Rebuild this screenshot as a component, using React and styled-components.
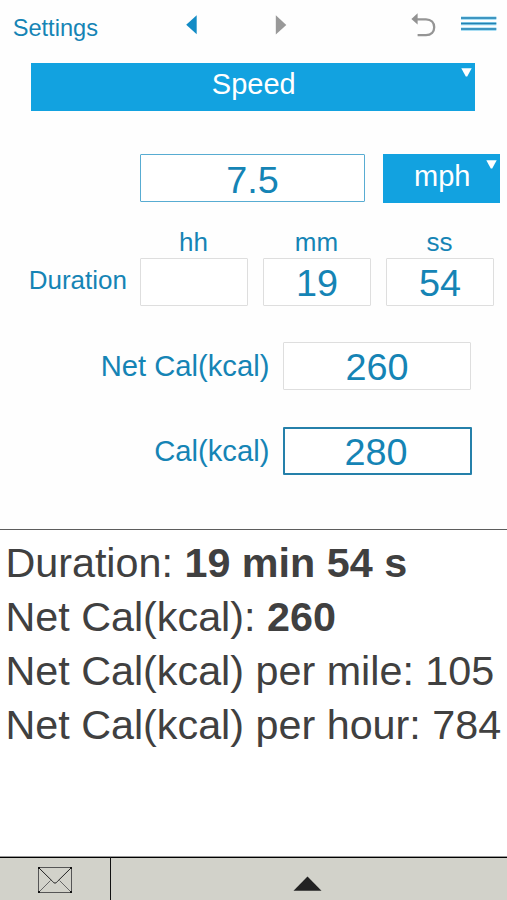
import React from "react";
import styled, { createGlobalStyle } from "styled-components";

const Global = createGlobalStyle`
  * { box-sizing: border-box; }
  body { margin: 0; background: #fefefe; }
`;

const Screen = styled.main`
  display: flex;
  flex-direction: column;
  width: 507px;
  height: 900px;
  overflow: hidden;
  background: #fefefe;
  color: #1584b5;
  font-family: "Liberation Sans", Arial, sans-serif;
  white-space: nowrap;
`;

const Toolbar = styled.header`
  display: flex;
  align-items: flex-start;
  height: 63px;
  flex: none;
`;

const SettingsLink = styled.a`
  width: 173px;
  padding-left: 12.7px;
  margin-top: 14px;
  font-size: 23.6px;
  line-height: 28px;
`;

const ToolIcon = styled.svg`
  display: block;
  flex: none;
  width: ${(p) => p.$w}px;
  height: 50px;
`;

const Dropdown = styled.button`
  position: relative;
  flex: none;
  width: ${(p) => p.$w}px;
  height: ${(p) => p.$h}px;
  margin: 0 0 0 ${(p) => p.$left}px;
  padding: 0 0 ${(p) => p.$lift}px 1.6px;
  border: 0;
  background: #12a2e0;
  color: #fff;
  font: 29px/34px "Liberation Sans", Arial, sans-serif;
  text-align: center;
`;

const DropMark = styled.svg`
  position: absolute;
  top: ${(p) => p.$top}px;
  right: 3px;
  width: 11px;
  height: 9px;
`;

const SpeedRow = styled.div`
  display: flex;
  flex: none;
  height: 49px;
  margin-top: 43px;
  padding-left: 140px;
`;

const borders = {
  light: "1px solid #dedede",
  accent: "1px solid #58acd2",
  focused: "2px solid #2580aa",
};

const Field = styled.div`
  flex: none;
  width: ${(p) => p.$w}px;
  height: 48px;
  padding-top: ${(p) => p.$pad || 0}px;
  padding-right: ${(p) => (p.$tone === "focused" ? 3 : 0)}px;
  border: ${(p) => borders[p.$tone || "light"]};
  border-radius: 1px;
  background: #fff;
  font-size: 37.8px;
  line-height: ${(p) => (p.$tone === "focused" ? 46 : 48)}px;
  text-align: center;
`;

const DurationGrid = styled.div`
  display: grid;
  flex: none;
  grid-template-columns: 125px 108px 108px 108px;
  grid-template-rows: 31px 48px;
  column-gap: 15px;
  margin-top: 24px;
  text-align: center;
`;

const UnitLabel = styled.span`
  font-size: 26px;
  line-height: 31px;
  padding-right: 1px;
`;

const DurationLabel = styled.span`
  font-size: 26px;
  line-height: 44px;
  text-align: right;
  margin-right: -2px;
`;

const EnergyRow = styled.div`
  display: flex;
  flex: none;
  height: 48px;
  margin-top: ${(p) => p.$top}px;
`;

const EnergyLabel = styled.span`
  width: 283px;
  padding-right: 13.6px;
  font-size: 29.2px;
  line-height: 49px;
  text-align: right;
`;

const Results = styled.section`
  flex: 1;
  margin-top: 54px;
  padding: 6px 0 0 5.4px;
  border-top: 1px solid #5c5c5c;
  color: #404040;
  background: #fff;
  font-size: 41.3px;
`;

const ResultLine = styled.div`
  height: 54px;
  line-height: 54px;
`;

const Footer = styled.footer`
  display: flex;
  flex: none;
  height: 44px;
  border-top: 1px solid #999;
  background: #d2d2ca;
  box-shadow: inset 0 1px #000;
`;

const FooterCell = styled.div`
  flex: ${(p) => (p.$w ? "none" : 1)};
  width: ${(p) => (p.$w ? `${p.$w}px` : "auto")};
  border-right: ${(p) => (p.$w ? "1px solid #111" : 0)};
  svg { display: block; }
`;

function Mark({ top }) {
  return (
    <DropMark $top={top} viewBox="0 0 11 9">
      <path d="M.3.3h10.4L6.2 8.4H4.8Z" fill="#fff" />
    </DropMark>
  );
}

export default function App() {
  return (
    <Screen>
      <Global />
      <Toolbar>
        <SettingsLink>Settings</SettingsLink>
        <ToolIcon $w={90} viewBox="0 0 90 50">
          <path d="M13.2 24.8 23.7 15.3v19Z" fill="#128bc5" />
        </ToolIcon>
        <ToolIcon $w={137} viewBox="0 0 137 50">
          <path d="M12.8 15.2v19.4L23.3 24.9Z" fill="#999" />
        </ToolIcon>
        <ToolIcon $w={50} viewBox="0 0 50 50">
          <path d="M11.4 19.1 17.6 13.2v11.4Z" fill="#929292" />
          <path d="M16.8 19.3H26C31.2 19.3 34.2 22.6 34.2 27.2S31.2 35.1 26 35.1H17.6" fill="none" stroke="#959595" strokeWidth="2.3" />
        </ToolIcon>
        <ToolIcon $w={50} viewBox="0 0 50 50">
          <path d="M11 18.2h35.3M11 23.7h35.3M11 29.2h35.3" stroke="#8fd3ef" strokeWidth="3.2" />
          <path d="M11 18h35.3M11 23.5h35.3M11 29h35.3" stroke="#2482b2" strokeWidth="1.6" />
        </ToolIcon>
      </Toolbar>

      <Dropdown $w={444} $h={48} $left={31} $lift={6}>
        Speed
        <Mark top={5} />
      </Dropdown>

      <SpeedRow>
        <Field $w={225} $tone="accent" $pad={1}>7.5</Field>
        <Dropdown $w={117} $h={49} $left={18} $lift={6}>
          mph
          <Mark top={6} />
        </Dropdown>
      </SpeedRow>

      <DurationGrid>
        <span />
        <UnitLabel>hh</UnitLabel>
        <UnitLabel>mm</UnitLabel>
        <UnitLabel>ss</UnitLabel>
        <DurationLabel>Duration</DurationLabel>
        <Field $w={108} />
        <Field $w={108}>19</Field>
        <Field $w={108}>54</Field>
      </DurationGrid>

      <EnergyRow $top={36}>
        <EnergyLabel>Net Cal(kcal)</EnergyLabel>
        <Field $w={188}>260</Field>
      </EnergyRow>
      <EnergyRow $top={37}>
        <EnergyLabel>Cal(kcal)</EnergyLabel>
        <Field $w={189} $tone="focused">280</Field>
      </EnergyRow>

      <Results>
        <ResultLine>Duration: <b>19 min 54 s</b></ResultLine>
        <ResultLine>Net Cal(kcal): <b>260</b></ResultLine>
        <ResultLine>Net Cal(kcal) per mile: 105</ResultLine>
        <ResultLine>Net Cal(kcal) per hour: 784</ResultLine>
      </Results>

      <Footer>
        <FooterCell $w={111}>
          <svg width="110" height="43" viewBox="0 0 110 43" fill="none">
            <path d="M38.5 10.5h33v25h-33Z" stroke="#555" />
            <path d="M38.5 10.5 52.5 24.3Q55 28 57.5 24.3L71.5 10.5" stroke="#222" />
            <path d="M38.5 35.5 50.5 23.5M71.5 35.5 59.5 23.5" stroke="#666" />
            <path d="M38 10h2v2h-2ZM70 10h2v2h-2ZM38 34h2v2h-2ZM70 34h2v2h-2Z" fill="#111" />
          </svg>
        </FooterCell>
        <FooterCell>
          <svg width="396" height="43" viewBox="0 0 396 43">
            <path d="M182.5 33.7 196.5 19.6 210.5 33.7Z" fill="#222" />
          </svg>
        </FooterCell>
      </Footer>
    </Screen>
  );
}
